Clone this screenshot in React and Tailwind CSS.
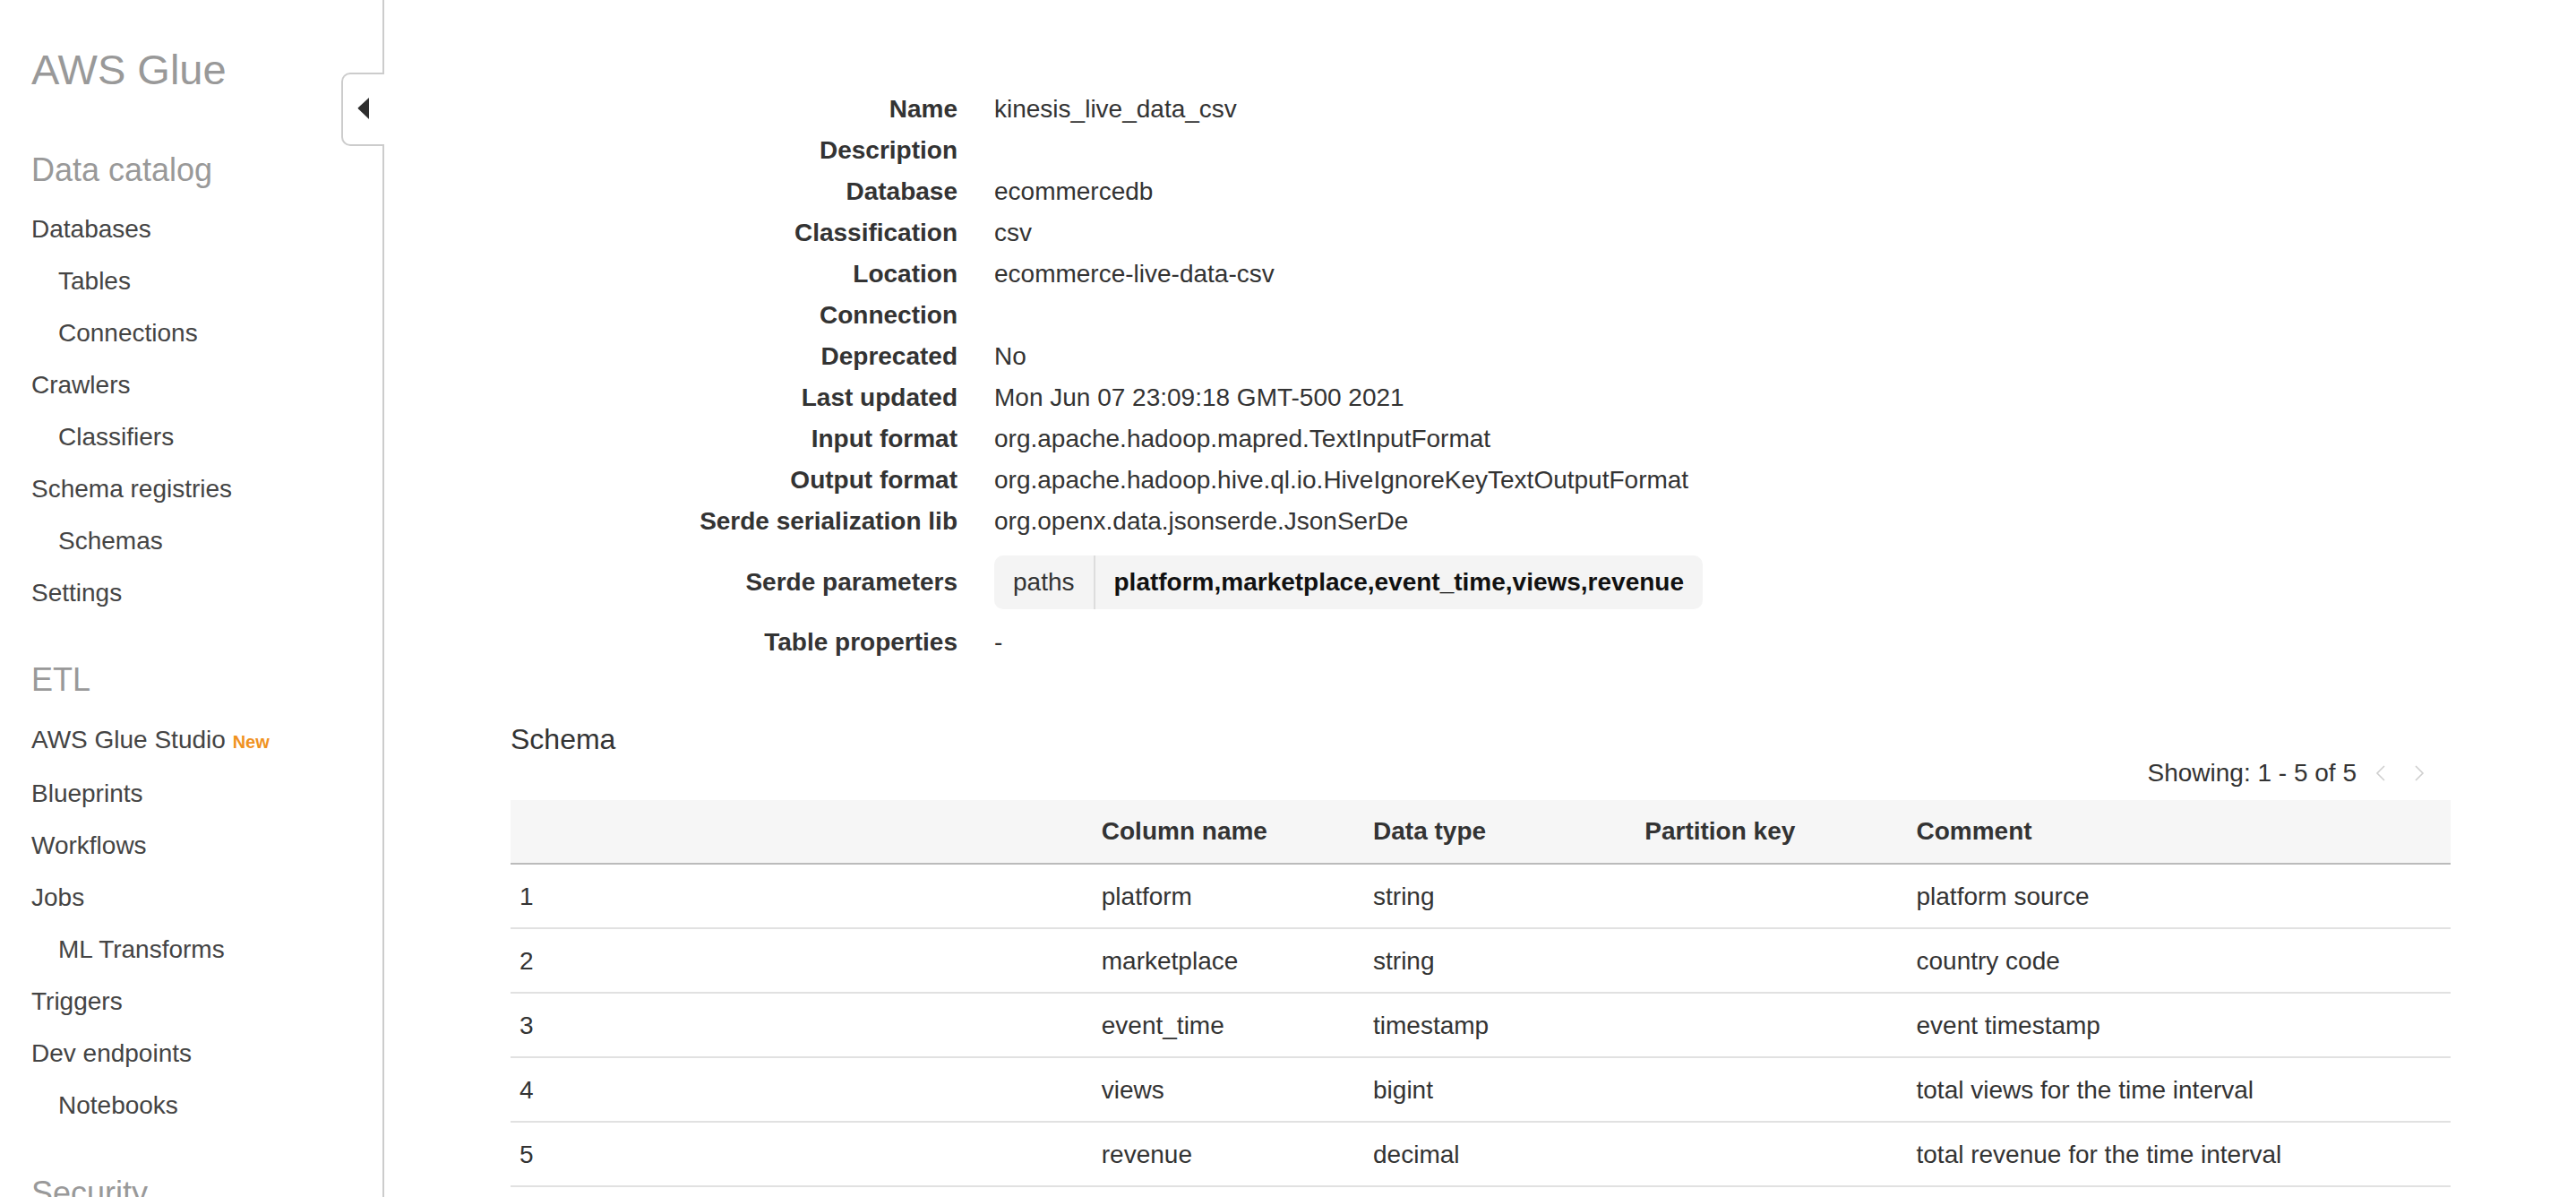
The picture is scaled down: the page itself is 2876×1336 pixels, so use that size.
import React from "react";

const details = [
  ["Name", "kinesis_live_data_csv"],
  ["Description", ""],
  ["Database", "ecommercedb"],
  ["Classification", "csv"],
  ["Location", "ecommerce-live-data-csv"],
  ["Connection", ""],
  ["Deprecated", "No"],
  ["Last updated", "Mon Jun 07 23:09:18 GMT-500 2021"],
  ["Input format", "org.apache.hadoop.mapred.TextInputFormat"],
  ["Output format", "org.apache.hadoop.hive.ql.io.HiveIgnoreKeyTextOutputFormat"],
  ["Serde serialization lib", "org.openx.data.jsonserde.JsonSerDe"],
];

const rows = [
  ["1", "platform", "string", "", "platform source"],
  ["2", "marketplace", "string", "", "country code"],
  ["3", "event_time", "timestamp", "", "event timestamp"],
  ["4", "views", "bigint", "", "total views for the time interval"],
  ["5", "revenue", "decimal", "", "total revenue for the time interval"],
];

function NavItem({ children, indent }) {
  return <li className={indent ? "pl-[30px]" : ""}>{children}</li>;
}

function Sidebar() {
  return (
    <aside className="relative w-[429px] shrink-0 border-r-2 border-[#cccccc] pl-[35px] pt-[52px]">
      <div className="text-[47px] leading-[52px] text-[#999999]">AWS Glue</div>

      <div className="mt-[64px] text-[36px] leading-[44px] text-[#999999]">Data catalog</div>
      <ul className="mt-[15px] text-[28px] leading-[58px] text-[#444444]">
        <NavItem>Databases</NavItem>
        <NavItem indent>Tables</NavItem>
        <NavItem indent>Connections</NavItem>
        <NavItem>Crawlers</NavItem>
        <NavItem indent>Classifiers</NavItem>
        <NavItem>Schema registries</NavItem>
        <NavItem indent>Schemas</NavItem>
        <NavItem>Settings</NavItem>
      </ul>

      <div className="mt-[46px] text-[36px] leading-[44px] text-[#999999]">ETL</div>
      <ul className="mt-[16px] text-[28px] leading-[58px] text-[#444444]">
        <NavItem>
          AWS Glue Studio <span className="text-[20px] font-bold text-[#f0921f]">New</span>
        </NavItem>
        <NavItem>Blueprints</NavItem>
        <NavItem>Workflows</NavItem>
        <NavItem>Jobs</NavItem>
        <NavItem indent>ML Transforms</NavItem>
        <NavItem>Triggers</NavItem>
        <NavItem>Dev endpoints</NavItem>
        <NavItem indent>Notebooks</NavItem>
      </ul>

      <div className="mt-[47px] text-[36px] leading-[44px] text-[#999999]">Security</div>

      <button className="absolute top-[81px] right-[-2px] flex h-[82px] w-[48px] items-center justify-center rounded-l-[10px] border-2 border-r-0 border-[#cccccc] bg-white">
        <svg width="14" height="24" viewBox="0 0 14 24" className="-mt-[3px]">
          <polygon points="13,0 13,24 1,12.5 0.5,11.5" fill="#2e2e2e" strokeLinejoin="round" />
        </svg>
      </button>
    </aside>
  );
}

function Chevron({ dir }) {
  return (
    <svg width="12" height="18" viewBox="0 0 12 18">
      <polyline
        points={dir === "left" ? "10,1 2,9 10,17" : "2,1 10,9 2,17"}
        fill="none"
        stroke="#cfcfcf"
        strokeWidth="1.6"
      />
    </svg>
  );
}

function Main() {
  return (
    <main className="flex-1 pl-[141px] pr-[140px] pt-[99px] text-[28px] text-[#333333]">
      <div className="grid grid-cols-[499px_1fr] gap-x-[41px] leading-[46px]">
        {details.map(([k, v]) => (
          <React.Fragment key={k}>
            <div className="text-right font-bold">{k}</div>
            <div className="h-[46px] whitespace-nowrap">{v}</div>
          </React.Fragment>
        ))}

        <div className="self-center text-right font-bold">Serde parameters</div>
        <div className="pt-[15px] pb-[14px]">
          <div className="inline-flex h-[60px] items-stretch rounded-[10px] bg-[#f4f4f4]">
            <div className="flex items-center border-r-2 border-[#dddddd] px-[21px]">paths</div>
            <div className="flex items-center px-[21px] font-bold text-[#111111]">
              platform,marketplace,event_time,views,revenue
            </div>
          </div>
        </div>

        <div className="text-right font-bold">Table properties</div>
        <div>-</div>
      </div>

      <h2 className="mt-[65px] text-[32px] leading-[40px] text-[#333333]">Schema</h2>

      <div className="mt-[2px] flex items-center justify-end pr-[29px] leading-[32px]">
        <span>Showing: 1 - 5 of 5</span>
        <span className="ml-[21px] flex items-center">
          <Chevron dir="left" />
        </span>
        <span className="ml-[31px] flex items-center">
          <Chevron dir="right" />
        </span>
      </div>

      <div className="mt-[14px]">
        <div className="grid h-[72px] grid-cols-[30%_14%_14%_14%_28%] items-center border-b-2 border-[#bbbbbb] bg-[#f6f6f6] font-bold">
          <div className="pl-[10px]"></div>
          <div className="pl-[10px]">Column name</div>
          <div className="pl-[10px]">Data type</div>
          <div className="pl-[10px]">Partition key</div>
          <div className="pl-[10px]">Comment</div>
        </div>
        {rows.map((r) => (
          <div
            key={r[0]}
            className="grid h-[72px] grid-cols-[30%_14%_14%_14%_28%] items-center border-b-2 border-[#e1e1e1] pt-[2px]"
          >
            {r.map((c, i) => (
              <div key={i} className="whitespace-nowrap pl-[10px]">
                {c}
              </div>
            ))}
          </div>
        ))}
      </div>
    </main>
  );
}

export default function App() {
  return (
    <div className="flex h-[1336px] w-full overflow-hidden bg-white font-['Liberation_Sans',Arial,sans-serif]">
      <Sidebar />
      <Main />
    </div>
  );
}
